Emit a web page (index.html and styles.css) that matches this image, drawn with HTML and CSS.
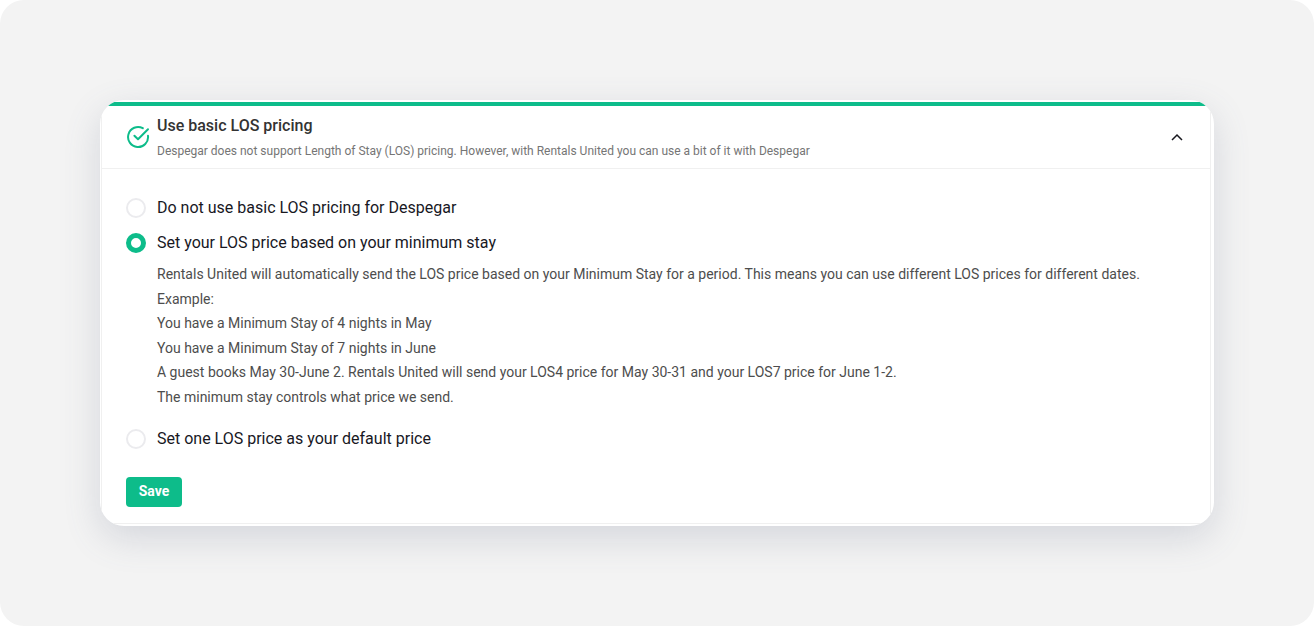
FILE: index.html
```
<!DOCTYPE html>
<html lang="en">
<head>
    <meta charset="utf-8">
    <title>Use basic LOS pricing</title>
    <meta name="viewport" content="width=device-width, initial-scale=1">
    <link rel="stylesheet" href="styles.css">
</head>
<body>
    <main class="page">
        <div class="card">
            <section class="panel">
                <header class="panel-header">
                    <svg class="status-icon" viewBox="0 0 24 24" aria-hidden="true">
                        <path d="M22 10.8A10 10 0 1 1 16.8 3.2" />
                        <path d="M8.4 10.8L12 14.3L22 4.2" />
                    </svg>
                    <div class="heading">
                        <h1>Use basic LOS pricing</h1>
                        <p>Despegar does not support Length of Stay (LOS) pricing. However, with Rentals United you can use a bit of it with Despegar</p>
                    </div>
                    <button class="toggle" type="button" aria-label="Collapse" aria-expanded="true">
                        <svg viewBox="0 0 12 12" aria-hidden="true">
                            <path d="M1 9L6 4L11 9" />
                        </svg>
                    </button>
                </header>
                <form class="panel-body">
                    <div class="option">
                        <input type="radio" name="los" id="los-none">
                        <label for="los-none">Do not use basic LOS pricing for Despegar</label>
                    </div>
                    <div class="option">
                        <input type="radio" name="los" id="los-min-stay" checked>
                        <label for="los-min-stay">Set your LOS price based on your minimum stay</label>
                    </div>
                    <div class="description">
                        <p>Rentals United will automatically send the LOS price based on your Minimum Stay for a period. This means you can use different LOS prices for different dates.</p>
                        <p>Example:</p>
                        <p>You have a Minimum Stay of 4 nights in May</p>
                        <p>You have a Minimum Stay of 7 nights in June</p>
                        <p>A guest books May 30-June 2. Rentals United will send your LOS4 price for May 30-31 and your LOS7 price for June 1-2.</p>
                        <p>The minimum stay controls what price we send.</p>
                    </div>
                    <div class="option">
                        <input type="radio" name="los" id="los-default">
                        <label for="los-default">Set one LOS price as your default price</label>
                    </div>
                    <button class="save" type="button">Save</button>
                </form>
            </section>
        </div>
    </main>
</body>
</html>
```
FILE: styles.css
```
* {
    box-sizing: border-box;
}
html {
    background-color: #fff;
}
body {
    margin: 0;
    font-family: Roboto, "Liberation Sans", sans-serif;
    color: #18181f;
}
h1, p {
    margin: 0;
}
.page {
    min-height: 100vh;
    padding: 100px;
    background-color: #f3f3f3;
    border-radius: 24px;
}
.card {
    padding: 2px 3px 2px 1px;
    overflow: hidden;
    background-color: #fff;
    border-radius: 24px;
    box-shadow: 0 12px 36px rgba(90, 100, 130, 0.2);
}
.panel {
    border: 1px solid #f0f0f0;
    border-top: 4px solid #0dbc8a;
}

.panel-header {
    display: flex;
    align-items: center;
    padding: 7px 24px;
    border-bottom: 1px solid #f0f0f0;
}
.status-icon {
    flex: none;
    width: 24px;
    height: 24px;
    margin-right: 7px;
    fill: none;
    stroke: #0dbc8a;
    stroke-width: 2;
    stroke-linecap: round;
    stroke-linejoin: round;
}
.heading {
    flex: 1;
}
.heading h1 {
    font-size: 16px;
    font-weight: 500;
    line-height: 26px;
    color: #333;
}
.heading p {
    margin-top: 2px;
    font-size: 12px;
    line-height: 20px;
    color: #757575;
}
.toggle {
    display: flex;
    padding: 3px;
    border: 0;
    background: none;
    cursor: pointer;
}
.toggle svg {
    width: 12px;
    height: 12px;
    fill: none;
    stroke: #18181f;
    stroke-width: 1.5;
}

.panel-body {
    padding: 29px 24px 16px;
}
.option {
    display: flex;
    align-items: center;
}
.option + .option {
    margin-top: 15px;
}
.option input {
    appearance: none;
    flex: none;
    width: 20px;
    height: 20px;
    margin: 0 11px 0 0;
    border: 2px solid #ebebee;
    border-radius: 50%;
    background-color: #fff;
}
.option input:checked {
    border: 5px solid #0dbc8a;
}
.option label {
    font-size: 16px;
    line-height: 20px;
}
.description {
    margin: 9px 0 20px 31px;
    font-size: 14px;
    line-height: 1.75;
    color: #4d4d4d;
}
.save {
    display: block;
    min-width: 56px;
    height: 30px;
    margin-top: 28px;
    padding: 0 12px 2px;
    border: 0;
    border-radius: 4px;
    background-color: #0dbc8a;
    color: #fff;
    font-family: inherit;
    font-size: 14px;
    font-weight: 700;
    cursor: pointer;
}
```
